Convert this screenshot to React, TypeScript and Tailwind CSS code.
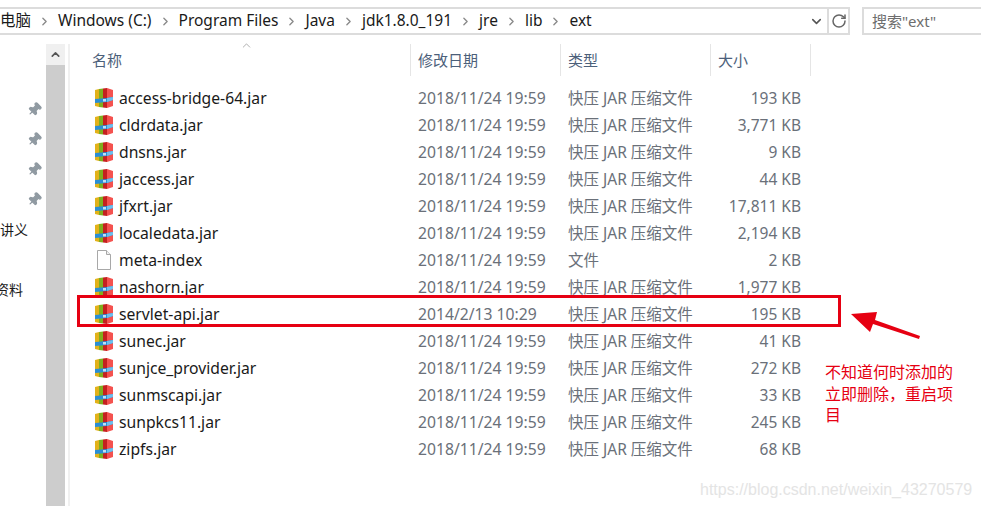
import { ChevronDown, ChevronRight, ChevronUp, Pin, RotateCw } from "lucide-react";

interface FileRow {
  name: string;
  date: string;
  type: string;
  size: string;
  plain?: boolean;
}

const DATE = "2018/11/24 19:59";
const JAR = "快压 JAR 压缩文件";

const files: FileRow[] = [
  { name: "access-bridge-64.jar", date: DATE, type: JAR, size: "193 KB" },
  { name: "cldrdata.jar", date: DATE, type: JAR, size: "3,771 KB" },
  { name: "dnsns.jar", date: DATE, type: JAR, size: "9 KB" },
  { name: "jaccess.jar", date: DATE, type: JAR, size: "44 KB" },
  { name: "jfxrt.jar", date: DATE, type: JAR, size: "17,811 KB" },
  { name: "localedata.jar", date: DATE, type: JAR, size: "2,194 KB" },
  { name: "meta-index", date: DATE, type: "文件", size: "2 KB", plain: true },
  { name: "nashorn.jar", date: DATE, type: JAR, size: "1,977 KB" },
  { name: "servlet-api.jar", date: "2014/2/13 10:29", type: JAR, size: "195 KB" },
  { name: "sunec.jar", date: DATE, type: JAR, size: "41 KB" },
  { name: "sunjce_provider.jar", date: DATE, type: JAR, size: "272 KB" },
  { name: "sunmscapi.jar", date: DATE, type: JAR, size: "33 KB" },
  { name: "sunpkcs11.jar", date: DATE, type: JAR, size: "245 KB" },
  { name: "zipfs.jar", date: DATE, type: JAR, size: "68 KB" },
];

const crumbs = ["Windows (C:)", "Program Files", "Java", "jdk1.8.0_191", "jre", "lib", "ext"];

function ArchiveIcon() {
  return (
    <svg width="19" height="20" viewBox="0 0 19 20" className="shrink-0">
      <path d="M0 2 L4 1 V19 L0 18 Z" fill="#e2b21a" />
      <path d="M4 1 L8 0.5 V19.5 L4 19 Z" fill="#7fae1e" />
      <path d="M8 0.5 L12 0 V20 L8 19.5 Z" fill="#c4211f" />
      <path d="M12 0 L18 2 V18 L12 20 Z" fill="#f4524f" />
      <path d="M0 11 L12 10 L18 9 V12 L12 14 L0 15 Z" fill="#2a8fd6" />
      <path d="M12 10 L18 9 V12 L12 14 Z" fill="#6cc0ee" />
      <rect x="8" y="11" width="3" height="2.5" fill="#bfe0f4" />
    </svg>
  );
}

function PlainFileIcon() {
  return (
    <svg width="16" height="20" viewBox="0 0 16 20" className="shrink-0 ml-[1px] mr-[2px]">
      <path d="M1.5 0.5 H10.5 L14.5 4.5 V19.5 H1.5 Z" fill="#ffffff" stroke="#a8a8a8" />
      <path d="M10.5 0.5 V4.5 H14.5" fill="#f0f0f0" stroke="#a8a8a8" />
    </svg>
  );
}

export default function App() {
  return (
    <div
      className="relative w-[981px] h-[506px] overflow-hidden bg-white text-[15.7px] text-[#1a1a1a]"
      style={{ fontFamily: '"Noto Sans", "Noto Sans CJK SC", sans-serif' }}
    >
      {/* 주소줄 */}
      <div className="flex h-[35px] pt-[7px]">
        <div className="flex items-center w-[850px] h-[28px] border-y-2 border-r-2 border-[#dcdcdc] text-[15.5px]">
          <span className="whitespace-nowrap">电脑</span>
          {crumbs.map((c) => (
            <div key={c} className="flex items-center">
              <ChevronRight size={13} strokeWidth={2.5} className="mx-[7px] text-[#8a8a8a]" />
              <span className="whitespace-nowrap">{c}</span>
            </div>
          ))}
          <div className="flex-1" />
          <ChevronDown size={15} strokeWidth={2.5} className="mr-[3px] text-[#555]" />
          <div className="flex items-center justify-center w-[21px] h-full border-l-2 border-[#dcdcdc]">
            <RotateCw size={16} strokeWidth={2.25} className="text-[#666]" />
          </div>
        </div>
        <div className="flex items-center flex-1 h-[28px] ml-[12px] pl-[8px] border-y-2 border-l-2 border-[#dcdcdc] text-[#6d6d6d] text-[15px]">
          搜索"ext"
        </div>
      </div>

      <div className="flex h-[471px]">
        {/* 사이드바 */}
        <div className="w-[46px] pt-[59px] overflow-hidden text-[14px]">
          {[0, 1, 2, 3].map((i) => (
            <div key={i} className="flex items-center justify-end h-[30px] pr-[4px]">
              <Pin size={15} className="rotate-45 text-[#909aa2] fill-[#909aa2]" />
            </div>
          ))}
          <div className="flex items-center h-[30px] whitespace-nowrap">讲义</div>
          <div className="h-[30px]" />
          <div className="flex items-center h-[30px] whitespace-nowrap ml-[-5px]">资料</div>
        </div>

        {/* 스크롤바 */}
        <div className="flex flex-col w-[19px] mt-[9px] bg-[#cdcdcd]">
          <div className="flex items-center justify-center h-[21px] bg-[#f0f0f0]">
            <ChevronUp size={13} strokeWidth={3} className="text-[#555]" />
          </div>
        </div>
        <div className="w-[2px] ml-[3px] mt-[9px] bg-[#f0f0f0]" />

        {/* 파일 목록 */}
        <div className="flex-1 relative">
          <div className="flex h-[50px] pt-[9px] text-[15px] text-[#4c607a]">
            <div className="flex items-center w-[341px] h-[32px] pl-[22px] border-r border-[#e5e5e5]">名称</div>
            <div className="flex items-center w-[150px] h-[32px] pl-[7px] border-r border-[#e5e5e5]">修改日期</div>
            <div className="flex items-center w-[150px] h-[32px] pl-[7px] border-r border-[#e5e5e5]">类型</div>
            <div className="flex items-center w-[100px] h-[32px] pl-[7px] border-r border-[#e5e5e5]">大小</div>
          </div>
          <ChevronUp size={13} className="absolute left-[170px] top-[4px] text-[#8a8a8a]" strokeWidth={1.25} />
          {files.map((f) => (
            <div key={f.name} className="flex items-center h-[27px] whitespace-nowrap">
              <div className="flex items-center gap-[5px] w-[348px] pl-[25px]">
                {f.plain ? <PlainFileIcon /> : <ArchiveIcon />}
                <span className="pt-[1px]">{f.name}</span>
              </div>
              <div className="w-[150px] pt-[1px] text-[#6a7079]">{f.date}</div>
              <div className="w-[130px] pt-[1px] text-[15.5px] text-[#6a7079]">{f.type}</div>
              <div className="w-[103px] pt-[1px] text-right text-[15.5px] text-[#6a7079]">{f.size}</div>
            </div>
          ))}
        </div>
      </div>

      {/* 빨간 표시 */}
      <div className="absolute left-[77px] top-[295px] w-[764px] h-[32px] border-[3px] border-[#e60012]" />
      <svg className="absolute left-[850px] top-[310px]" width="72" height="34" viewBox="0 0 72 34">
        <path d="M1 4 L27 2 L25 10 L70 26 L69 29 L23 14 L20 22 Z" fill="#e60012" />
      </svg>
      <div className="absolute left-[825px] top-[362px] w-[130px] text-[16px] leading-[21.5px] text-[#e60012]">
        不知道何时添加的立即删除，重启项目
      </div>
      <div
        className="absolute left-[700px] top-[478px] text-[16px] text-[#e4e4e4] whitespace-nowrap"
        style={{ fontFamily: '"Liberation Sans", sans-serif' }}
      >
        https://blog.csdn.net/weixin_43270579
      </div>
    </div>
  );
}
